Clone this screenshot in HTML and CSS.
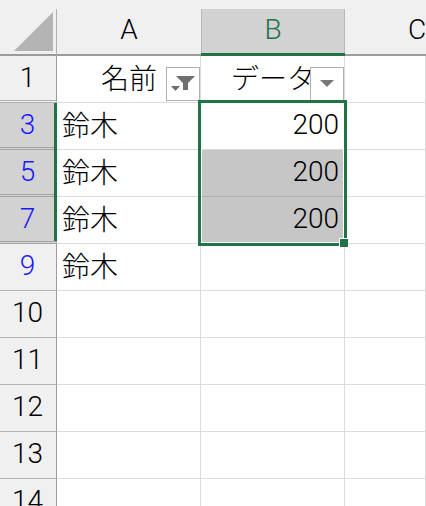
FILE: index.html
```html
<!DOCTYPE html>
<html lang="ja">
<head>
    <meta charset="UTF-8">
    <title>Sheet</title>
    <link rel="stylesheet" href="styles.css">
</head>
<body>
    <div class="sheet">
        <div class="corner">
            <svg width="39" height="39" viewBox="0 0 39 39"><polygon points="39,0 39,39 0,39" fill="#b4b4b4"/></svg>
        </div>
        <div class="col-head">A</div>
        <div class="col-head col-on">B</div>
        <div class="col-head col-c">C</div>

        <div class="row-head row-first">1</div>
        <div class="cell cell-title">
            <span class="jp">名前</span>
            <div class="filter-btn">
                <svg width="25" height="16" viewBox="0 0 25 16">
                    <polygon points="5,0 24,0 17,7 17,14 12,14 12,7" fill="#6f6f6f"/>
                    <polygon points="0,10 9,10 4.500,15" fill="#6f6f6f"/>
                </svg>
            </div>
        </div>
        <div class="cell cell-title cell-clip">
            <span class="jp">データ</span>
            <div class="filter-btn">
                <svg width="14" height="8" viewBox="0 0 14 8"><polygon points="0,0 14,0 7,7" fill="#777"/></svg>
            </div>
        </div>
        <div class="cell"></div>

        <div class="row-head row-on">3</div>
        <div class="cell"><span class="jp">鈴木</span></div>
        <div class="cell num">200</div>
        <div class="cell"></div>

        <div class="row-head row-on">5</div>
        <div class="cell"><span class="jp">鈴木</span></div>
        <div class="cell num cell-sel">200</div>
        <div class="cell"></div>

        <div class="row-head row-on">7</div>
        <div class="cell"><span class="jp">鈴木</span></div>
        <div class="cell num cell-sel">200</div>
        <div class="cell"></div>

        <div class="row-head row-blue">9</div>
        <div class="cell"><span class="jp">鈴木</span></div>
        <div class="cell"></div>
        <div class="cell"></div>

        <div class="row-head">10</div><div class="cell"></div><div class="cell"></div><div class="cell"></div>
        <div class="row-head">11</div><div class="cell"></div><div class="cell"></div><div class="cell"></div>
        <div class="row-head">12</div><div class="cell"></div><div class="cell"></div><div class="cell"></div>
        <div class="row-head">13</div><div class="cell"></div><div class="cell"></div><div class="cell"></div>
        <div class="row-head">14</div><div class="cell"></div><div class="cell"></div><div class="cell"></div>

        <div class="row-mark"></div>
        <div class="selection"><div class="fill-handle"></div></div>
    </div>
</body>
</html>
```

FILE: styles.css
```css
html, body {
    margin: 0;
    padding: 0;
    height: 100%;
    overflow: hidden;
    background: #fff;
}
.sheet {
    position: relative;
    display: grid;
    grid-template-columns: 57px 144px 144px 81px;
    grid-template-rows: 56px repeat(10, 47px);
    height: 506px;
    overflow: hidden;
    background: linear-gradient(#f0f0f0 9px, #fff 9px);
    font-family: Roboto, "Noto Sans CJK JP", sans-serif;
    font-weight: 300;
    font-size: 28px;
    line-height: 36px;
    color: #000;
}
.jp {
    padding-top: 4px;
}
.corner {
    margin-top: 9px;
    background: #f0f0f0;
    border-right: 1px solid #b0b0b0;
    border-bottom: 2px solid #9c9c9c;
    display: flex;
    align-items: flex-end;
    justify-content: flex-end;
    padding: 0 3px 3px 0;
    box-sizing: border-box;
}
.col-head {
    margin-top: 9px;
    background: #f0f0f0;
    border-bottom: 2px solid #9c9c9c;
    box-sizing: border-box;
    padding-bottom: 3px;
    display: flex;
    align-items: center;
    justify-content: center;
}
.col-on {
    background: #d2d2d2;
    border-bottom: 3px solid #217346;
    color: #217346;
    box-shadow: inset 1px 0 0 #b8b8b8, inset -1px 0 0 #b8b8b8;
}
.col-c {
    justify-content: flex-start;
    padding-left: 63px;
}
.row-head {
    background: #f0f0f0;
    border-right: 1px solid #9c9c9c;
    border-bottom: 1px solid #b4b4b4;
    box-sizing: border-box;
    display: flex;
    align-items: center;
    justify-content: center;
    padding: 0 1px 3px 0;
}
.row-first {
    border-bottom: 3px double #b0b0b0;
    padding-bottom: 1px;
}
.row-on {
    background: #d2d2d2;
    color: #1a1aff;
    border-bottom: 3px double #a4a4a4;
    padding-bottom: 1px;
}
.row-blue {
    color: #1a1aff;
}
.cell {
    border-right: 1px solid #dcdcdc;
    border-bottom: 1px solid #dcdcdc;
    box-sizing: border-box;
    display: flex;
    align-items: center;
    padding: 0 5px 3px;
    white-space: nowrap;
}
.cell-title {
    position: relative;
    justify-content: flex-end;
    padding: 0 43px 3px 0;
}
.cell-clip {
    overflow: hidden;
    padding-right: 29px;
}
.filter-btn {
    position: absolute;
    right: 0;
    bottom: 1px;
    width: 34px;
    height: 34px;
    background: #fff;
    border: 1px solid #b0b0b0;
    box-sizing: border-box;
    display: flex;
    align-items: center;
    justify-content: center;
}
.num {
    justify-content: flex-end;
}
.cell-sel {
    background: #c6c6c6;
    border-bottom-color: #aeaeae;
}
.row-mark {
    position: absolute;
    left: 54px;
    top: 103px;
    width: 3px;
    height: 138px;
    background: #217346;
}
.selection {
    position: absolute;
    left: 198px;
    top: 100px;
    width: 149px;
    height: 146px;
    border: 3px solid #217346;
    outline: 1px solid #fff;
    outline-offset: -4px;
    box-sizing: border-box;
}
.fill-handle {
    position: absolute;
    right: -4px;
    bottom: -4px;
    width: 8px;
    height: 8px;
    background: #217346;
    border: 1px solid #fff;
    border-width: 1px 0 0 1px;
}
```
